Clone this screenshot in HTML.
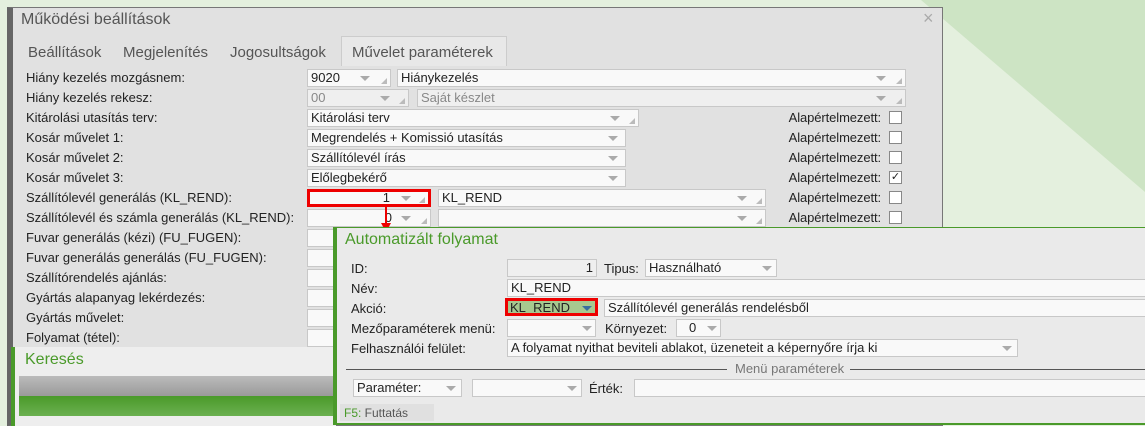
<!DOCTYPE html><html><head><meta charset="utf-8"><style>
*{box-sizing:border-box;margin:0;padding:0}
body{width:1145px;height:426px;overflow:hidden;position:relative;background:#e4f0de;font-family:"Liberation Sans",sans-serif;font-size:13px;color:#222}
.a{position:absolute;white-space:nowrap}
.in{position:absolute;height:18px;background:#f9f9f9;border:1px solid #c8c8c8;padding:0 3px;line-height:16px;font-size:13px;white-space:nowrap;overflow:hidden}
.dis{background:#efefef;color:#888}
.ar{position:absolute;top:6px;width:0;height:0;border-left:5px solid transparent;border-right:5px solid transparent;border-top:5px solid #aaa}
.rs{position:absolute;bottom:2px;right:3px;width:0;height:0;border-left:6px solid transparent;border-bottom:6px solid #bbb}
.lb{position:absolute;left:26px;font-size:13px;line-height:16px;white-space:nowrap}
.ck{position:absolute;left:889px;width:13px;height:13px;background:#fff;border:1px solid #888;font-size:11px;line-height:11px;text-align:center}
.al{position:absolute;left:700px;width:181px;text-align:right;font-size:13px;line-height:16px;letter-spacing:-0.1px}
</style></head><body>
<svg class="a" style="left:0;top:0" width="1145" height="426"><polygon points="921,0 1145,0 1145,192" fill="#cde4c4"/></svg>
<div class="a" style="left:7px;top:7px;width:936px;height:419px;background:#e1e1e1;border:1px solid #777;border-left:6px solid #666"></div>
<div class="a" style="left:21px;top:11px;font-size:16px;color:#555">Működési beállítások</div>
<div class="a" style="left:923px;top:8px;font-size:18px;color:#aaa">×</div>
<div class="a" style="left:28px;top:44px;font-size:15px;color:#555">Beállítások</div>
<div class="a" style="left:123px;top:44px;font-size:15px;color:#555">Megjelenítés</div>
<div class="a" style="left:230px;top:44px;font-size:15px;color:#555">Jogosultságok</div>
<div class="a" style="left:341px;top:36px;width:166px;height:30px;background:#e8e8e8;border:1px solid #ccc;border-bottom:none;padding:7px 0 0 10px;font-size:15px;color:#555">Művelet paraméterek</div>

<div class="lb" style="top:70px">Hiány kezelés mozgásnem:</div>
<div class="in" style="left:307px;top:69px;width:84px">9020<span class="ar" style="left:52px"></span><span class="rs"></span></div>
<div class="in" style="left:397px;top:69px;width:509px">Hiánykezelés<span class="ar" style="left:478px"></span><span class="rs"></span></div>
<div class="lb" style="top:90px">Hiány kezelés rekesz:</div>
<div class="in dis" style="left:307px;top:89px;width:102px">00<span class="ar" style="left:72px"></span><span class="rs"></span></div>
<div class="in dis" style="left:417px;top:89px;width:489px">Saját készlet<span class="ar" style="left:458px"></span><span class="rs"></span></div>
<div class="lb" style="top:110px">Kitárolási utasítás terv:</div>
<div class="in" style="left:307px;top:109px;width:332px">Kitárolási terv<span class="ar" style="left:302px"></span><span class="rs"></span></div>
<div class="lb" style="top:130px">Kosár művelet 1:</div>
<div class="in" style="left:307px;top:129px;width:319px">Megrendelés + Komissió utasítás<span class="ar" style="left:300px"></span></div>
<div class="lb" style="top:150px">Kosár művelet 2:</div>
<div class="in" style="left:307px;top:149px;width:319px">Szállítólevél írás<span class="ar" style="left:300px"></span></div>
<div class="lb" style="top:170px">Kosár művelet 3:</div>
<div class="in" style="left:307px;top:169px;width:319px">Előlegbekérő<span class="ar" style="left:300px"></span></div>
<div class="lb" style="top:190px">Szállítólevél generálás (KL_REND):</div>
<div class="in" style="left:307px;top:189px;width:124px;text-align:right;padding-right:38px;border:3px solid #e00;line-height:12px">1<span class="ar" style="left:91px;top:4px"></span><span class="rs" style="bottom:1px"></span></div>
<div class="in" style="left:438px;top:189px;width:328px">KL_REND<span class="ar" style="left:298px"></span><span class="rs"></span></div>
<div class="lb" style="top:210px">Szállítólevél és számla generálás (KL_REND):</div>
<div class="in" style="left:307px;top:209px;width:124px;text-align:right;padding-right:38px">0<span class="ar" style="left:93px"></span><span class="rs"></span></div>
<div class="in" style="left:438px;top:209px;width:328px"><span class="ar" style="left:298px"></span><span class="rs"></span></div>
<div class="al" style="top:110px">Alapértelmezett:</div><div class="ck" style="top:111px"></div>
<div class="al" style="top:130px">Alapértelmezett:</div><div class="ck" style="top:131px"></div>
<div class="al" style="top:150px">Alapértelmezett:</div><div class="ck" style="top:151px"></div>
<div class="al" style="top:170px">Alapértelmezett:</div><div class="ck" style="top:171px">✓</div>
<div class="al" style="top:190px">Alapértelmezett:</div><div class="ck" style="top:191px"></div>
<div class="al" style="top:210px">Alapértelmezett:</div><div class="ck" style="top:211px"></div>
<div class="lb" style="top:230px">Fuvar generálás (kézi) (FU_FUGEN):</div>
<div class="lb" style="top:250px">Fuvar generálás generálás (FU_FUGEN):</div>
<div class="lb" style="top:270px">Szállítórendelés ajánlás:</div>
<div class="lb" style="top:290px">Gyártás alapanyag lekérdezés:</div>
<div class="lb" style="top:310px">Gyártás művelet:</div>
<div class="lb" style="top:330px">Folyamat (tétel):</div>
<div class="in" style="left:307px;top:229px;width:30px"></div>
<div class="in" style="left:307px;top:249px;width:30px"></div>
<div class="in" style="left:307px;top:269px;width:30px"></div>
<div class="in" style="left:307px;top:289px;width:30px"></div>
<div class="in" style="left:307px;top:309px;width:30px"></div>
<div class="in" style="left:307px;top:329px;width:30px"></div>

<div class="a" style="left:11px;top:347px;width:325px;height:79px;background:#eee;border-left:4px solid #4a9a2a"></div>
<div class="a" style="left:25px;top:351px;font-size:16px;color:#4a9a2a">Keresés</div>
<div class="a" style="left:19px;top:376px;width:317px;height:20px;background:linear-gradient(#bbb,#9a9a9a)"></div>
<div class="a" style="left:19px;top:396px;width:317px;height:20px;background:linear-gradient(#4a9a2a,#6bb050)"></div>

<svg class="a" style="left:380px;top:207px" width="12" height="26"><line x1="6" y1="0" x2="6" y2="18" stroke="#e00" stroke-width="2"/><polygon points="1,16 11,16 6,25" fill="#e00"/></svg>

<div class="a" style="left:333px;top:227px;width:812px;height:198px;background:#eaeaea;border-left:4px solid #4a9a2a;border-top:1px solid #4a9a2a;border-bottom:2px solid #4a9a2a"></div>
<div class="a" style="left:345px;top:231px;font-size:16px;color:#4a9a2a">Automatizált folyamat</div>
<div class="a" style="left:351px;top:261px">ID:</div>
<div class="in dis" style="left:507px;top:259px;width:90px;text-align:right;color:#222">1</div>
<div class="a" style="left:604px;top:261px">Tipus:</div>
<div class="in" style="left:645px;top:259px;width:132px">Használható<span class="ar" style="left:116px"></span></div>
<div class="a" style="left:351px;top:281px">Név:</div>
<div class="in" style="left:507px;top:279px;width:640px">KL_REND</div>
<div class="a" style="left:351px;top:301px">Akció:</div>
<div class="in" style="left:505px;top:298px;width:93px;background:#a7c88f;border:3px solid #e00;line-height:14px;padding-left:2px">KL_REND<span class="ar" style="left:74px;top:5px;border-top-color:#3a6ea0"></span></div>
<div class="in" style="left:604px;top:299px;width:543px">Szállítólevél generálás rendelésből</div>
<div class="a" style="left:351px;top:321px">Mezőparaméterek menü:</div>
<div class="in" style="left:507px;top:319px;width:89px"><span class="ar" style="left:74px"></span></div>
<div class="a" style="left:605px;top:321px">Környezet:</div>
<div class="in" style="left:676px;top:319px;width:45px;padding-left:12px">0<span class="ar" style="left:30px"></span></div>
<div class="a" style="left:351px;top:341px">Felhasználói felület:</div>
<div class="in" style="left:507px;top:339px;width:511px">A folyamat nyithat beviteli ablakot, üzeneteit a képernyőre írja ki<span class="ar" style="left:494px"></span></div>
<div class="a" style="left:346px;top:369px;width:381px;height:1px;background:#555"></div>
<div class="a" style="left:735px;top:361px;color:#777">Menü paraméterek</div>
<div class="a" style="left:850px;top:369px;width:295px;height:1px;background:#555"></div>
<div class="in" style="left:353px;top:379px;width:109px">Paraméter:<span class="ar" style="left:92px"></span></div>
<div class="in" style="left:472px;top:379px;width:110px"><span class="ar" style="left:94px"></span></div>
<div class="a" style="left:589px;top:381px">Érték:</div>
<div class="in" style="left:634px;top:379px;width:513px"></div>
<div class="a" style="left:340px;top:404px;width:94px;height:17px;background:#e0e0e0;padding:2px 0 0 4px;font-size:12px;color:#555"><span style="color:#4a9a2a">F5:</span> Futtatás</div>
</body></html>
